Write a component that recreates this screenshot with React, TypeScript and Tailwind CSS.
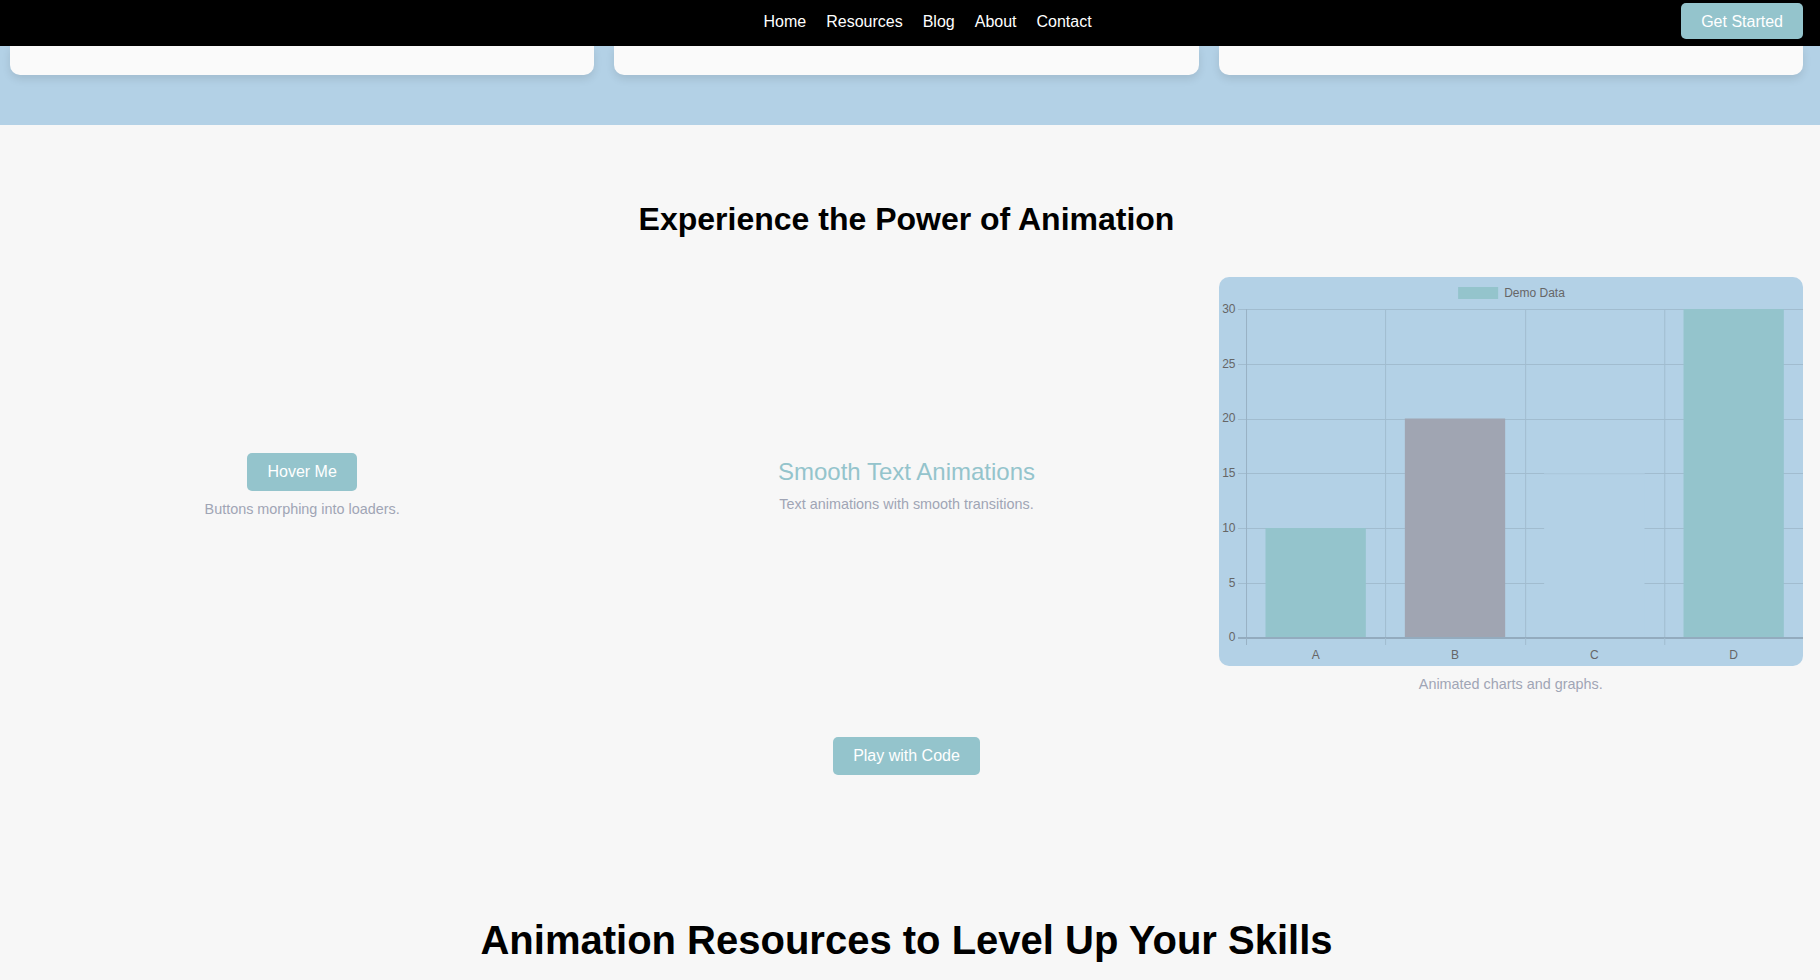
const navLinks = ['Home', 'Resources', 'Blog', 'About', 'Contact']

interface Bar {
  label: string
  value: number
  color: string
}

const bars: Bar[] = [
  { label: 'A', value: 10, color: '#94c4cc' },
  { label: 'B', value: 20, color: '#a0a5b2' },
  { label: 'C', value: 15, color: '#b3d1e6' },
  { label: 'D', value: 30, color: '#94c4cc' },
]

// chart geometry (px inside the 584x389 canvas)
const plotLeft = 27
const plotRight = 584
const zeroY = 360.5
const unit = 10.95
const yOf = (v: number) => zeroY - v * unit
const catW = (plotRight - plotLeft) / bars.length
const barW = catW * 0.72

const DemoChart = () => {
  const ticks = [0, 5, 10, 15, 20, 25, 30]
  return (
    <div className="w-full h-[389px] rounded-[10px] bg-[#b3d1e6] overflow-hidden">
      <svg width="100%" height="100%" viewBox="0 0 584 389" preserveAspectRatio="none">
        {/* legend */}
        <rect x={239} y={10} width={40} height={12} fill="#94c4cc" />
        <text x={285} y={20} fontSize={12} fill="#666" fontFamily="Liberation Sans, Arial, sans-serif">
          Demo Data
        </text>

        {/* horizontal grid + y ticks */}
        {ticks.map((t) => (
          <g key={t}>
            <line
              x1={19}
              x2={plotRight}
              y1={Math.round(yOf(t)) + 0.5}
              y2={Math.round(yOf(t)) + 0.5}
              stroke={t === 0 ? '#93abbe' : '#a1bccf'}
              strokeWidth={1}
            />
            <text
              x={16.5}
              y={yOf(t) + 4}
              fontSize={12}
              fill="#666"
              textAnchor="end"
              fontFamily="Liberation Sans, Arial, sans-serif"
            >
              {t}
            </text>
          </g>
        ))}

        {/* vertical grid */}
        {[0, 1, 2, 3].map((i) => (
          <line
            key={i}
            x1={Math.round(plotLeft + i * catW) + 0.5}
            x2={Math.round(plotLeft + i * catW) + 0.5}
            y1={32}
            y2={368}
            stroke={i === 0 ? '#99b2c5' : '#a1bccf'}
            strokeWidth={1}
          />
        ))}

        {/* bars */}
        {bars.map((b, i) => {
          const cx = plotLeft + catW * (i + 0.5)
          const top = yOf(b.value)
          return (
            <g key={b.label}>
              <rect x={cx - barW / 2} y={top} width={barW} height={zeroY - 0.5 - top} fill={b.color} />
              {b.label === 'C' && (
                <line x1={cx - barW / 2} x2={cx + barW / 2} y1={top + 0.5} y2={top + 0.5} stroke="#aac7db" />
              )}
              <text
                x={cx}
                y={382}
                fontSize={12}
                fill="#666"
                textAnchor="middle"
                fontFamily="Liberation Sans, Arial, sans-serif"
              >
                {b.label}
              </text>
            </g>
          )
        })}

        {/* x axis on top of bars */}
        <line x1={19} x2={plotRight} y1={360.5} y2={360.5} stroke="#93abbe" strokeWidth={1} />
      </svg>
    </div>
  )
}

const App = () => {
  return (
    <div className="min-h-screen bg-[#f7f7f7] font-['Liberation_Sans',Arial,sans-serif] text-black">
      {/* top bar */}
      <nav className="h-[46px] bg-black flex items-start justify-between pt-[3px] px-[17px]">
        <div className="w-[157px]" />
        <ul className="h-[36px] pt-[2px] flex items-center gap-[20px]">
          {navLinks.map((link) => (
            <li key={link}>
              <a href="#" className="text-white text-[16px] leading-[18px]">
                {link}
              </a>
            </li>
          ))}
        </ul>
        <button className="h-[36px] px-[20px] pt-[2px] rounded-[5px] bg-[#94c4cc] text-white text-[16px] leading-[18px]">
          Get Started
        </button>
      </nav>

      {/* hero cards (scrolled) */}
      <section className="bg-[#b3d1e6] pl-[10px] pr-[17px] pb-[50px]">
        <div className="grid grid-cols-3 gap-[20px]">
          {[1, 2, 3].map((c) => (
            <div
              key={c}
              className="h-[29px] bg-[#fafafa] rounded-b-[10px] shadow-[0_4px_8px_rgba(0,0,0,0.1)]"
            />
          ))}
        </div>
      </section>

      {/* animation showcase */}
      <section className="pt-[76px] pb-[60px] pl-[10px] pr-[17px]">
        <h2 className="text-center text-[32px] leading-[37px] font-bold">Experience the Power of Animation</h2>

        <div className="mt-[39px] grid grid-cols-3 gap-[20px] items-center">
          <div className="flex flex-col items-center">
            <button className="h-[38px] px-[20px] rounded-[5px] bg-[#94c4cc] text-white text-[16px] leading-[18px]">
              Hover Me
            </button>
            <p className="mt-[10px] text-[14.4px] leading-[16px] text-[#a0a5b5]">Buttons morphing into loaders.</p>
          </div>

          <div className="flex flex-col items-center">
            <h3 className="text-[24px] leading-[28px] text-[#94c4cc]">Smooth Text Animations</h3>
            <p className="mt-[10px] text-[14.4px] leading-[16px] text-[#a0a5b5]">
              Text animations with smooth transitions.
            </p>
          </div>

          <div className="flex flex-col items-center">
            <DemoChart />
            <p className="mt-[10px] text-[14.4px] leading-[16px] text-[#a0a5b5]">Animated charts and graphs.</p>
          </div>
        </div>

        <div className="mt-[45px] flex justify-center">
          <button className="h-[38px] px-[20px] rounded-[5px] bg-[#94c4cc] text-white text-[16px] leading-[18px]">
            Play with Code
          </button>
        </div>
      </section>

      {/* resources */}
      <section className="pt-[82px] pb-[200px] pl-[10px] pr-[17px]">
        <h2 className="text-center text-[40px] leading-[46px] font-bold">Animation Resources to Level Up Your Skills</h2>
      </section>
    </div>
  )
}

export default App
